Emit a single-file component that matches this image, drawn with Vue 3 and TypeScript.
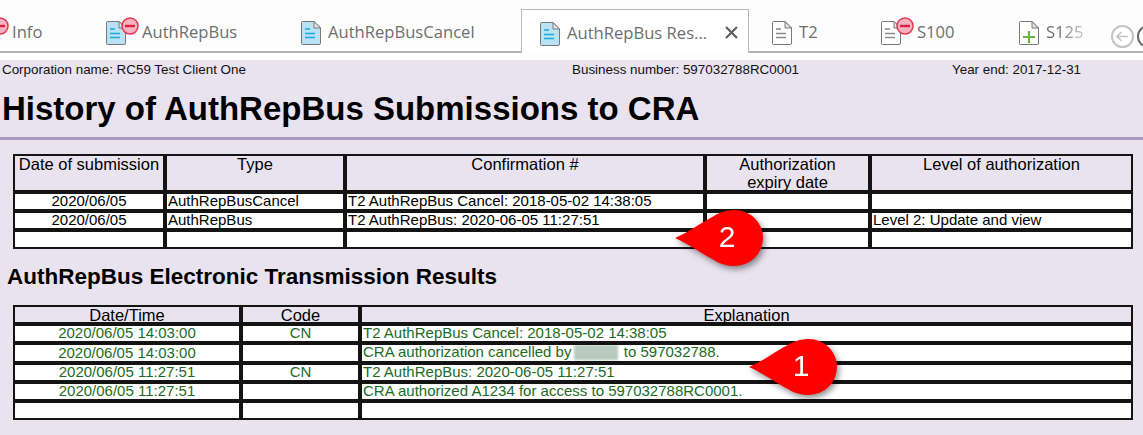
<template>
  <div class="page">
    <div class="tab-bar">
      <div class="tabs">
        <div
          v-for="tab in tabs"
          :key="tab.label"
          class="tab"
          :class="[tab.id, { active: tab.active }]"
        >
          <svg class="doc" width="20" height="24" viewBox="0 0 20 24">
            <path
              d="M1.5.5H13L19.5 7V22a1.5 1.5 0 0 1-1.5 1.5H1.5A1 1 0 0 1 .5 22.5V1.5a1 1 0 0 1 1-1Z"
              :fill="tab.kind === 'blue' ? '#b9e2f5' : '#fff'"
              stroke="#777"
            />
            <path d="M13 .5V7h6.5Z" fill="#e4e4e4" stroke="#777" />
            <template v-if="tab.kind === 'blue'">
              <path d="M4 8h5M4 12.5h10M4 16.5h10" stroke="#1fa8dc" stroke-width="1.3" />
            </template>
            <template v-else-if="tab.kind === 'grey'">
              <path d="M4 8h5M4 12.5h10M4 16.5h10" stroke="#8a8a8a" stroke-width="1.3" />
            </template>
            <path v-else d="M10 10v12M4 16h12" stroke="#6cb33f" stroke-width="2.2" />
          </svg>
          <svg v-if="tab.minus" class="minus" width="18" height="18" viewBox="0 0 18 18">
            <circle cx="9" cy="9" r="8" fill="#f7b4c0" stroke="#e8334f" stroke-width="1.5" />
            <path d="M4 9h10" stroke="#e0203f" stroke-width="2.4" />
          </svg>
          <span class="tab-label" :class="{ shifted: tab.minus }">{{ tab.label }}</span>
          <svg v-if="tab.active" class="close" width="13" height="13" viewBox="0 0 13 13">
            <path d="M1 1l11 11M12 1L1 12" stroke="#5f5f5f" stroke-width="2.2" />
          </svg>
        </div>
      </div>
      <div class="nav">
        <svg width="23" height="23" viewBox="0 0 23 23">
          <circle cx="11.5" cy="11.5" r="10.5" fill="#fff" stroke="#c4c4c4" stroke-width="2" />
          <path d="M17 11.5H6M10.5 7l-4.5 4.5 4.5 4.5" fill="none" stroke="#c4c4c4" stroke-width="1.6" />
        </svg>
        <svg width="23" height="23" viewBox="0 0 23 23">
          <circle cx="11.5" cy="11.5" r="10.5" fill="#fff" stroke="#6a6a6a" stroke-width="2" />
        </svg>
      </div>
    </div>

    <div class="content">
      <div class="info-row">
        <span class="corp">Corporation name: RC59 Test Client One</span>
        <span class="bn">Business number: 597032788RC0001</span>
        <span>Year end: 2017-12-31</span>
      </div>
      <h1>History of AuthRepBus Submissions to CRA</h1>
      <div class="rule"></div>

      <table class="grid history">
        <colgroup>
          <col v-for="w in historyCols" :key="w" :style="{ width: w + 'px' }" />
        </colgroup>
        <thead>
          <tr>
            <th v-for="h in historyHead" :key="h"><div class="head-box" v-html="h"></div></th>
          </tr>
        </thead>
        <tbody>
          <tr v-for="(row, i) in historyRows" :key="i">
            <td class="center">{{ row[0] }}</td>
            <td>{{ row[1] }}</td>
            <td>{{ row[2] }}</td>
            <td>{{ row[3] }}</td>
            <td>{{ row[4] }}</td>
          </tr>
        </tbody>
      </table>

      <h2>AuthRepBus Electronic Transmission Results</h2>

      <table class="grid results">
        <colgroup>
          <col v-for="w in resultCols" :key="w" :style="{ width: w + 'px' }" />
        </colgroup>
        <thead>
          <tr>
            <th>Date/Time</th>
            <th>Code</th>
            <th>Explanation</th>
          </tr>
        </thead>
        <tbody>
          <tr v-for="(row, i) in resultRows" :key="i">
            <td class="center">{{ row.date }}</td>
            <td class="center">{{ row.code }}</td>
            <td v-if="row.blurred">CRA authorization cancelled by <span class="blurred"></span> to 597032788.</td>
            <td v-else>{{ row.text }}</td>
          </tr>
        </tbody>
      </table>

      <div v-for="c in callouts" :key="c.n" class="callout" :class="'callout-' + c.n">
        <svg width="90" height="60" viewBox="0 0 90 60">
          <path
            d="M0 28C14 22 27 12 39 6 45 2 53 0 60 0A28 28 0 1 1 60 56C53 56 45 54 39 50 27 44 14 34 0 28Z"
            fill="#fe0000"
          />
        </svg>
        <span>{{ c.n }}</span>
      </div>
    </div>
  </div>
</template>

<script setup lang="ts">
// One entry per document tab
const tabs = [
  { id: "t-info", label: "Info", kind: "blue", minus: true },
  { id: "t-bus", label: "AuthRepBus", kind: "blue", minus: true },
  { id: "t-cancel", label: "AuthRepBusCancel", kind: "blue" },
  { id: "t-res", label: "AuthRepBus Res...", kind: "blue", active: true },
  { id: "t-t2", label: "T2", kind: "grey" },
  { id: "t-s100", label: "S100", kind: "grey", minus: true },
  { id: "t-s125", label: "S125", kind: "green" },
];

const historyCols = [152, 180, 360, 165, 263];
const historyHead = [
  "Date of submission",
  "Type",
  "Confirmation #",
  "Authorization<br>expiry date",
  "Level of authorization",
];
const historyRows = [
  ["2020/06/05", "AuthRepBusCancel", "T2 AuthRepBus Cancel: 2018-05-02 14:38:05", "", ""],
  ["2020/06/05", "AuthRepBus", "T2 AuthRepBus: 2020-06-05 11:27:51", "", "Level 2: Update and view"],
  ["", "", "", "", ""],
];

const resultCols = [228, 119, 773];
const resultRows = [
  { date: "2020/06/05 14:03:00", code: "CN", text: "T2 AuthRepBus Cancel: 2018-05-02 14:38:05" },
  { date: "2020/06/05 14:03:00", code: "", text: "", blurred: true },
  { date: "2020/06/05 11:27:51", code: "CN", text: "T2 AuthRepBus: 2020-06-05 11:27:51" },
  { date: "2020/06/05 11:27:51", code: "", text: "CRA authorized A1234 for access to 597032788RC0001." },
  { date: "", code: "", text: "" },
];

const callouts = [{ n: 2 }, { n: 1 }];
</script>

<style>
html,
body {
  margin: 0;
  height: 435px;
  overflow: hidden;
  background: #e9e3f0;
}
</style>

<style scoped>
.page {
  width: 1143px;
  height: 435px;
  overflow: hidden;
  position: relative;
  font-family: "Liberation Sans", Arial, sans-serif;
  background: #e9e3f0;
}
.tab-bar {
  display: flex;
  height: 60px;
  background: #fdfdfd;
  box-sizing: border-box;
  position: relative;
}
.tab-bar::after {
  content: "";
  position: absolute;
  left: 0;
  right: 0;
  top: 51px;
  height: 2px;
  background: #b3b3b3;
}
.tabs {
  display: flex;
  width: 1111px;
  overflow: hidden;
  height: 60px;
  padding-top: 9px;
  box-sizing: border-box;
  font-family: "Open Sans", sans-serif;
  font-size: 16.6px;
  color: #6e6e6e;
}
.tab {
  display: flex;
  align-items: center;
  position: relative;
  height: 44px;
  box-sizing: border-box;
  padding-top: 1px;
  flex: none;
  z-index: 1;
}
.t-info { margin-left: -24px; width: 130px; }
.t-bus { width: 172px; margin-right: 0; }
.t-cancel { margin-left: 23px; width: 197px; }
.t-res {
  width: 228px;
  padding-left: 18px;
  background: #fff;
  border: 1px solid #b9b9b9;
  border-bottom: none;
  margin-left: 23px;
  margin-right: 23px;
}
.t-t2 { width: 86px; }
.t-s100 { margin-left: 23px; width: 115px; }
.t-s125 { margin-left: 23px; }
.doc {
  flex: none;
  margin-top: 3px;
}
.minus {
  position: absolute;
  left: 15px;
  top: 8px;
}
.tab-label {
  margin-left: 7px;
  white-space: nowrap;
}
.tab-label.shifted {
  margin-left: 16px;
}
.t-s125 .tab-label {
  -webkit-mask-image: linear-gradient(to right, #000 30%, rgba(0, 0, 0, 0.35));
  mask-image: linear-gradient(to right, #000 30%, rgba(0, 0, 0, 0.35));
}
.close {
  margin-left: 18px;
  flex: none;
}
.nav {
  display: flex;
  gap: 3px;
  padding-top: 25px;
  overflow: hidden;
  width: 32px;
  flex: none;
  position: relative;
  z-index: 1;
  height: 30px;
}
.nav svg {
  flex: none;
}
.content {
  height: 375px;
  background: #e9e3f0;
  color: #000;
}
.info-row {
  display: flex;
  font-size: 13.4px;
  line-height: 14px;
  padding: 3px 0 0 2px;
  height: 17px;
  box-sizing: border-box;
  color: #111;
}
.corp {
  width: 570px;
}
.bn {
  width: 380px;
}
h1 {
  margin: 0;
  padding: 0 0 0 2px;
  font-size: 33px;
  line-height: 36px;
  margin-top: 14px;
  font-weight: bold;
}
.rule {
  height: 3px;
  background: #a898bb;
  margin-top: 10px;
}
.grid {
  border-collapse: separate;
  border-spacing: 0;
  table-layout: fixed;
  width: 1120px;
  margin-left: 13px;
  font-size: 15px;
}
.grid th,
.grid td {
  border: 2px solid #141414;
  padding: 0 1px 1px;
  overflow: hidden;
  white-space: nowrap;
  line-height: 14px;
  height: 14px;
}
.grid th {
  font-weight: normal;
  font-size: 16.5px;
  vertical-align: top;
  overflow: visible;
}
.grid td {
  background: #fff;
}
.center {
  text-align: center;
}
.history {
  margin-top: 14px;
}
.history th {
  padding-bottom: 0;
}
.head-box {
  height: 35px;
  line-height: 18px;
  margin-top: -1px;
}
h2 {
  margin: 0;
  padding-left: 7px;
  font-size: 22.5px;
  line-height: 24px;
  margin-top: 16px;
}
.results {
  margin-top: 16px;
}
.results th {
  padding-top: 1px;
  padding-bottom: 0;
}
.results td {
  color: #1b6b25;
}
.blurred {
  display: inline-block;
  width: 44px;
  height: 15px;
  margin: 0 2px 0 -2px;
  background: #b7cabd;
  filter: blur(1px);
  vertical-align: top;
}
.callout {
  position: absolute;
  width: 90px;
  height: 60px;
  filter: drop-shadow(2px 3px 3px rgba(0, 0, 0, 0.45));
}
.callout svg {
  display: block;
}
.callout span {
  position: absolute;
  left: 37px;
  top: 7px;
  width: 30px;
  text-align: center;
  color: #fff;
  font-size: 30px;
  line-height: 40px;
}
.callout-2 {
  left: 675px;
  top: 210px;
}
.callout-1 {
  left: 749px;
  top: 339px;
}
</style>
